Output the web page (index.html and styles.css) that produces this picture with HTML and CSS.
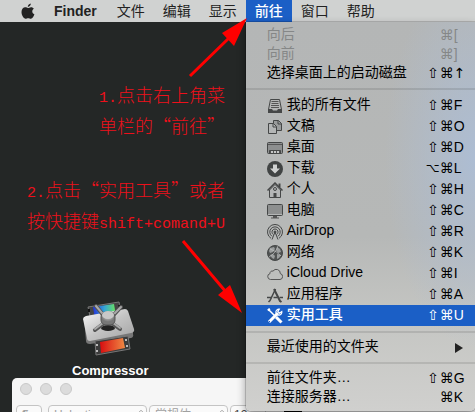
FILE: index.html
```html
<!DOCTYPE html>
<html lang="zh-CN">

<head>
    <meta charset="UTF-8">
    <meta name="viewport" content="width=device-width, initial-scale=1.0">
    <title>Finder - 前往</title>
    <link rel="stylesheet" href="styles.css">
</head>

<body>

    <header class="menubar">
        <button class="apple" aria-label="Apple">
            <svg width="14" height="17" viewBox="0 0 14 17">
                <path d="M9.8 0.6C9.9 2.4 8.5 3.9 6.8 4C6.6 2.3 8.1 0.8 9.8 0.6Z" />
                <path d="M7 5C7.8 5 8.7 4.2 10 4.2C11.3 4.2 12.3 4.8 12.9 5.7C10.5 7.1 10.9 10.2 13.4 11.3C12.8 13.1 11.4 15.8 9.9 15.8C8.8 15.8 8.4 15.2 7.2 15.2C6 15.2 5.5 15.8 4.5 15.8C2.7 15.8 0.5 12.3 0.5 9.1C0.5 6 2.3 4.3 4.2 4.3C5.4 4.3 6.3 5 7 5Z" />
            </svg>
        </button>
        <button class="app">Finder</button>
        <button>文件</button>
        <button>编辑</button>
        <button>显示</button>
        <div class="go">
            <button class="active">前往</button>

            <ul class="dropdown">
                <li><button disabled><span class="text">向后</span><kbd><i>⌘</i><b>[</b></kbd></button></li>
                <li><button disabled><span class="text">向前</span><kbd><i>⌘</i><b>]</b></kbd></button></li>
                <li><button><span class="text">选择桌面上的启动磁盘</span><kbd><i>⇧</i><i>⌘</i><b class="arrow">↑</b></kbd></button></li>
                <li class="separator"></li>
                <li class="place"><button>
                    <svg viewBox="0 0 16 16"><path d="M3.5 1.5h9l2 10v3h-13v-3z" fill="#b4b6b6" stroke="#454747" /><path d="M4.5 3.5h7M4.5 5.5h7M4 7.5h8M4 9.5h8" stroke="#555" /><path d="M1 11h4l1 1.500h4l1-1.500h4v4H1z" fill="#454747" /></svg>
                    <span class="text">我的所有文件</span><kbd><i>⇧</i><i>⌘</i><b>F</b></kbd></button></li>
                <li class="place"><button>
                    <svg viewBox="0 0 16 16"><path d="M6.500 1.500h5l3 3v7h-8z" fill="#999b9b" stroke="#454747" /><path d="M11 1.500v3.500h3.500" fill="none" stroke="#454747" /><path d="M1.500 4.500h5l3 3v7h-8z" fill="#b4b6b6" stroke="#454747" /><path d="M6 4.500v3.500h3.500" fill="none" stroke="#454747" /></svg>
                    <span class="text">文稿</span><kbd><i>⇧</i><i>⌘</i><b>O</b></kbd></button></li>
                <li class="place"><button>
                    <svg viewBox="0 0 16 16"><rect x=".5" y="2.500" width="15" height="11" rx="1" fill="#8d8f8f" stroke="#454747" /><path d="M1 4.500h14" stroke="#555" /><path d="M2.500 13v-2.500h11V13" fill="#555" stroke="#454747" /><path d="M4 12h2M7 12h2M10 12h2" stroke="#c5c7c7" stroke-width="2" /></svg>
                    <span class="text">桌面</span><kbd><i>⇧</i><i>⌘</i><b>D</b></kbd></button></li>
                <li class="place"><button>
                    <svg viewBox="0 0 16 16"><circle cx="8" cy="8" r="8" fill="#414444" /><path d="M6 3.500h4v4h3l-5 5-5-5h3z" fill="#d0d2d2" /></svg>
                    <span class="text">下载</span><kbd><i class="option">⌥</i><i>⌘</i><b>L</b></kbd></button></li>
                <li class="place"><button>
                    <svg viewBox="0 0 16 16"><path d="M2.500 8v7.500h11V8L8 2.500z" fill="#b4b6b6" stroke="#454747" /><path d="M12.500 5V1.500" stroke="#454747" stroke-width="2" /><path d="M.5 8.500L8 1l7.500 7.500" fill="none" stroke="#454747" stroke-width="1.500" /><circle cx="8" cy="7" r="1.500" fill="none" stroke="#454747" /><path d="M6.500 15v-4h3v4z" fill="#454747" /></svg>
                    <span class="text">个人</span><kbd><i>⇧</i><i>⌘</i><b>H</b></kbd></button></li>
                <li class="place"><button>
                    <svg viewBox="0 0 16 16"><rect x=".5" y="1.500" width="15" height="11" rx="1" fill="#8d8f8f" stroke="#454747" /><path d="M1 11.500h14" stroke="#b4b6b6" /><path d="M6 13h4v1.500h2v1H4v-1h2z" fill="#555" /></svg>
                    <span class="text">电脑</span><kbd><i>⇧</i><i>⌘</i><b>C</b></kbd></button></li>
                <li class="place"><button>
                    <svg viewBox="0 0 16 16" fill="none" stroke="#454747"><path d="M4 14.300a7.500 7.500 0 1 1 8 0M5 12.300a5.200 5.200 0 1 1 6 0M6.300 10.500a3 3 0 1 1 3.400 0" /><path d="M8 8L5 15.500M8 8l3 7.500" /><circle cx="8" cy="8" r="1" fill="#454747" /></svg>
                    <span class="text">AirDrop</span><kbd><i>⇧</i><i>⌘</i><b>R</b></kbd></button></li>
                <li class="place"><button>
                    <svg viewBox="0 0 16 16"><circle cx="8" cy="8" r="7.500" fill="#505353" stroke="#454747" /><path d="M3 3l4-1 1 2-2 3-3 1-1-2zM10 2l3 2 1 3-3 1-2-3zM3 10l3-1 2 2-1 3-2-1zM10 9l4 1-2 3-2 1z" fill="#9b9e9e" /><path d="M2 12Q9 8 11 1M3 4q7 2 11 7" fill="none" stroke="#c0c2c2" stroke-width=".7" /></svg>
                    <span class="text">网络</span><kbd><i>⇧</i><i>⌘</i><b>K</b></kbd></button></li>
                <li class="place"><button>
                    <svg viewBox="0 0 16 16"><path d="M3.500 13.500a3 3 0 0 1-.5-5.900a2.300 2.300 0 0 1 3-2.500a4 4 0 0 1 7.300 2.500a3 3 0 0 1-.3 5.900z" fill="none" stroke="#555" /></svg>
                    <span class="text">iCloud Drive</span><kbd><i>⇧</i><i>⌘</i><b>I</b></kbd></button></li>
                <li class="place"><button>
                    <svg viewBox="0 0 16 16" fill="none" stroke="#454747"><path d="M8.500 2L3 13.500l-1.500 1.500" stroke-width="1.500" /><path d="M7 2l6 12 1.500 1" stroke-width="2" /><path d="M0 10.500h5M6.500 10.500h4M12.500 10.500H16" stroke-width="1.500" /></svg>
                    <span class="text">应用程序</span><kbd><i>⇧</i><i>⌘</i><b>A</b></kbd></button></li>
                <li class="place"><button class="selected">
                    <svg viewBox="0 0 16 16" fill="none" stroke="#fff"><path d="M2 14L11 5" stroke-width="3" /><path d="M14.800 3.500a3 3 0 1 1-2.500-2.300L10.800 3.500l1.700 1.700z" stroke-width="1.200" /><path d="M1.500 1.500l6.500 6.500" stroke-width="1.500" /><path d="M.8 2.500l2-1.800" stroke-width="2" /><path d="M9 9l5.500 5.500" stroke-width="3" /><path d="M2 14l1-1" stroke="#1b5fc6" /></svg>
                    <span class="text">实用工具</span><kbd><i>⇧</i><i>⌘</i><b>U</b></kbd></button></li>
                <li class="separator"></li>
                <li><button><span class="text">最近使用的文件夹</span><span class="more"></span></button></li>
                <li class="separator"></li>
                <li><button><span class="text">前往文件夹…</span><kbd><i>⇧</i><i>⌘</i><b>G</b></kbd></button></li>
                <li><button><span class="text">连接服务器…</span><kbd><i>⌘</i><b>K</b></kbd></button></li>
            </ul>
        </div>
        <button>窗口</button>
        <button>帮助</button>
    </header>

    <main class="desktop">
        <p class="note step1"><span class="latin">1.</span>点击右上角菜<br>单栏的“前往”</p>
        <p class="note step2"><span class="latin">2.</span>点击“实用工具”或者<br>按快捷键<span class="latin">shift+comand+U</span></p>

        <div class="file">
            <svg width="54" height="56" viewBox="0 0 54 56">
                <defs>
                    <linearGradient id="plate" x1="0" y1="0" x2="1" y2="1">
                        <stop offset="0" stop-color="#fafafa" />
                        <stop offset=".5" stop-color="#c4c4c4" />
                        <stop offset="1" stop-color="#a2a2a2" />
                    </linearGradient>
                    <linearGradient id="cold">
                        <stop offset="0" stop-color="#2434d8" />
                        <stop offset=".5" stop-color="#35a5d5" />
                        <stop offset="1" stop-color="#6be45c" />
                    </linearGradient>
                    <linearGradient id="warm">
                        <stop offset="0" stop-color="#d80d10" />
                        <stop offset="1" stop-color="#f08a43" />
                    </linearGradient>
                    <radialGradient id="knob" cx=".5" cy=".25">
                        <stop offset="0" stop-color="#ddd" />
                        <stop offset="1" stop-color="#777" />
                    </radialGradient>
                </defs>
                <path d="M5 6L36 1l3 14L8 20z" fill="#444" stroke="#777" />
                <path d="M10 6l21-3 2 12-21 3z" fill="url(#cold)" />
                <path d="M6 8v3M36 4l1 3" stroke="#111" stroke-width="2" />
                <path d="M1 17l2 23q0 3 4 3l41-6q3-1 2-4v-4z" fill="#777" />
                <path d="M3 15L42 8q2 0 3 2l6 18q1 3-3 4L7 40q-3 0-3-3L0 18q0-2 3-3z" fill="url(#plate)" />
                <path d="M12 40l33-5 2 13-34 6z" fill="#3b3b3b" stroke="#777" />
                <path d="M17 41l23-4 2 10-24 5z" fill="url(#warm)" />
                <path d="M14 43v2M14 49v2M43 38v2M44 44v2" stroke="#bbb" stroke-width="2" />
                <ellipse cx="25" cy="27" rx="7" ry="3" fill="#222" />
                <path d="M25 20L13 5M25 20L38 6M24 20L12 29M26 20L37 28" stroke="#555" stroke-width="4" stroke-linecap="round" />
                <path d="M25 19L13 5M25 19L38 6M24 19L12 28M26 19L37 27" stroke="#aaa" stroke-width="2" stroke-linecap="round" />
                <rect x="18" y="11" width="14" height="13" rx="5" fill="url(#knob)" stroke="#555" />
                <ellipse cx="25" cy="14" rx="6" ry="4" fill="#c8c8c8" />
            </svg>
            <span>Compressor</span>
        </div>

        <section class="window">
            <div class="lights">
                <button aria-label="关闭"></button>
                <button aria-label="最小化"></button>
                <button aria-label="缩放"></button>
            </div>
            <div class="toolbar">
                <label class="style"><select aria-label="样式"><option>¶</option></select>
                    <svg viewBox="0 0 8 12"><path d="M1 5l3 3 3-3" /></svg></label>
                <label class="family"><select aria-label="字体"><option>Helvetica</option></select>
                    <svg viewBox="0 0 8 12"><path d="M1 4l3-3 3 3M1 8l3 3 3-3" /></svg></label>
                <label class="face"><select aria-label="字形"><option>常规体</option></select>
                    <svg viewBox="0 0 8 12"><path d="M1 4l3-3 3 3M1 8l3 3 3-3" /></svg></label>
                <label class="size"><select aria-label="字号"><option>12</option></select></label>
                <span class="swatch"></span>
            </div>
        </section>
    </main>

    <!-- flèches rouges au-dessus du bureau et du menu -->
    <svg class="arrows" width="260" height="330" viewBox="0 0 260 330">
        <path d="M190 76L230 37M183 241L226 292" stroke="#f00" stroke-width="3" />
        <path d="M247 18L234 46L222 33zM242 313L218 295L230 285z" fill="#f00" />
    </svg>

</body>

</html>
```

FILE: styles.css
```css
body {
    font-family: "Liberation Sans", "Noto Sans CJK SC", sans-serif;
    font-size: 14px;
    margin: 0;
    height: 100vh;
    display: flex;
    flex-direction: column;
    position: relative;
    overflow: hidden;
    background-color: #242726;
    color: #111;
}

button {
    font: inherit;
    color: inherit;
    border: 0;
    margin: 0;
    padding: 0;
    background: none;
}

.menubar {
    display: flex;
    height: 22px;
    padding-left: 21px;
    background-color: #d0d2d1;
    position: relative;
    z-index: 2;
}

.menubar > button,
.go > button {
    height: 22px;
    line-height: 22px;
    padding: 0 9px;
    white-space: nowrap;
    color: #222;
}

.menubar > .apple {
    padding: 0;
    margin-right: 10px;
}

.apple svg {
    display: block;
    margin-top: 1px;
    fill: #222;
}

.menubar > .app {
    font-weight: bold;
    padding-right: 11px;
}

.go {
    position: relative;
}

.go > .active {
    background-color: #1b5fc6;
    color: #fff;
    font-weight: 500;
}

/* menu déroulant */
.dropdown {
    position: absolute;
    top: 22px;
    left: 0;
    box-sizing: border-box;
    min-width: 229px;
    margin: 0;
    padding: 4px 0;
    list-style: none;
    border-radius: 0 0 5px 5px;
    color: #000;
    background: radial-gradient(ellipse 90px 190px at 100% 35%, #adbdd3, rgba(173, 189, 211, 0)),
        linear-gradient(#b4b6b6, #b6b8b7 55%, #c4c5c2 75%, #d0d0ce);
    box-shadow: 0 0 0 1px rgba(0, 0, 0, 0.15), 0 4px 10px rgba(0, 0, 0, 0.4);
}

.dropdown button {
    display: flex;
    align-items: center;
    width: 100%;
    height: 19px;
    padding-left: 21px;
    text-align: left;
    line-height: 16px;
    white-space: nowrap;
}

.dropdown .place button {
    height: 21px;
}

.dropdown button:disabled {
    color: #858787;
}

.dropdown .selected {
    background-color: #1b5fc6;
    color: #fff;
    font-weight: 500;
}

.dropdown svg {
    width: 16px;
    height: 16px;
    margin-right: 4px;
}

.text {
    flex: 1;
    padding-bottom: 3px;
}

kbd {
    display: flex;
    font: inherit;
    padding-bottom: 2px;
}

kbd i {
    width: 14px;
    font-family: "DejaVu Sans", sans-serif;
    font-style: normal;
    text-align: center;
}

kbd .option {
    font-size: 12px;
}

kbd b {
    width: 21px;
    font-weight: normal;
}

kbd .arrow {
    font-family: "DejaVu Sans", sans-serif;
}

.more {
    margin-right: 12px;
    border-left: 8px solid #222;
    border-top: 5px solid transparent;
    border-bottom: 5px solid transparent;
}

.separator {
    height: 2px;
    margin: 5px 0;
    background-color: rgba(0, 0, 0, 0.1);
}

/* bureau */
.desktop {
    flex: 1;
    position: relative;
}

.note {
    position: absolute;
    margin: 0;
    font-family: "Noto Sans CJK SC", sans-serif;
    font-size: 18px;
    font-weight: 300;
    line-height: 31px;
    white-space: nowrap;
    color: #ee101b;
}

.step1 {
    left: 99px;
    top: 57px;
}

.step2 {
    left: 27px;
    top: 152px;
}

.latin {
    font-family: "Liberation Mono", monospace;
    font-size: 15px;
    line-height: 1;
}

.file {
    position: absolute;
    left: 72px;
    top: 279px;
    display: flex;
    flex-direction: column;
    align-items: center;
    gap: 6px;
    font-size: 13px;
    font-weight: bold;
    line-height: 16px;
    color: #fff;
}

.window {
    position: absolute;
    left: 12px;
    right: 0;
    top: 356px;
    border-radius: 5px 0 0 0;
    background-color: #f6f6f6;
    overflow: hidden;
}

.lights {
    display: flex;
    gap: 8px;
    padding: 5px 8px 10px;
}

.lights button {
    box-sizing: border-box;
    width: 12px;
    height: 12px;
    border: 1px solid #c8c8c8;
    border-radius: 50%;
    background-color: #dcdcdc;
}

.toolbar {
    display: flex;
    gap: 2px;
    padding: 0 4px 6px;
}

.toolbar label {
    position: relative;
}

.toolbar select {
    appearance: none;
    box-sizing: border-box;
    width: 100%;
    height: 20px;
    padding: 0 5px;
    border: 1px solid #c4c4c4;
    border-radius: 4px;
    background-color: #fafafa;
    color: #a0a0a0;
    font-family: inherit;
    font-size: 12px;
}

.toolbar svg {
    position: absolute;
    right: 3px;
    top: 4px;
    width: 6px;
    height: 10px;
    fill: none;
    stroke: #888;
}

.style {
    width: 26px;
    margin-right: 4px;
}

.family {
    width: 99px;
}

.face {
    width: 79px;
}

.size {
    width: 36px;
}

.toolbar .size select {
    padding: 0 3px;
    color: #444;
}

.swatch {
    width: 18px;
    height: 14px;
    margin: 4px 0 0 16px;
    background-color: #000;
}

.arrows {
    position: absolute;
    left: 0;
    top: 0;
    z-index: 3;
    pointer-events: none;
}
```
